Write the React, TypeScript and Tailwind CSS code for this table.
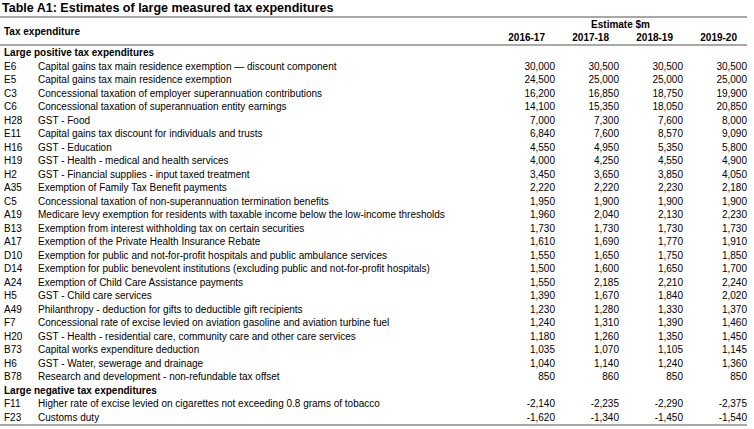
import React from "react";

type Row = [string, string, string, string, string, string];

const positive: Row[] = [
  ["E6", "Capital gains tax main residence exemption \u2014 discount component", "30,000", "30,500", "30,500", "30,500"],
  ["E5", "Capital gains tax main residence exemption", "24,500", "25,000", "25,000", "25,000"],
  ["C3", "Concessional taxation of employer superannuation contributions", "16,200", "16,850", "18,750", "19,900"],
  ["C6", "Concessional taxation of superannuation entity earnings", "14,100", "15,350", "18,050", "20,850"],
  ["H28", "GST - Food", "7,000", "7,300", "7,600", "8,000"],
  ["E11", "Capital gains tax discount for individuals and trusts", "6,840", "7,600", "8,570", "9,090"],
  ["H16", "GST - Education", "4,550", "4,950", "5,350", "5,800"],
  ["H19", "GST - Health - medical and health services", "4,000", "4,250", "4,550", "4,900"],
  ["H2", "GST - Financial supplies - input taxed treatment", "3,450", "3,650", "3,850", "4,050"],
  ["A35", "Exemption of Family Tax Benefit payments", "2,220", "2,220", "2,230", "2,180"],
  ["C5", "Concessional taxation of non-superannuation termination benefits", "1,950", "1,900", "1,900", "1,900"],
  ["A19", "Medicare levy exemption for residents with taxable income below the low-income thresholds", "1,960", "2,040", "2,130", "2,230"],
  ["B13", "Exemption from interest withholding tax on certain securities", "1,730", "1,730", "1,730", "1,730"],
  ["A17", "Exemption of the Private Health Insurance Rebate", "1,610", "1,690", "1,770", "1,910"],
  ["D10", "Exemption for public and not-for-profit hospitals and public ambulance services", "1,550", "1,650", "1,750", "1,850"],
  ["D14", "Exemption for public benevolent institutions (excluding public and not-for-profit hospitals)", "1,500", "1,600", "1,650", "1,700"],
  ["A24", "Exemption of Child Care Assistance payments", "1,550", "2,185", "2,210", "2,240"],
  ["H5", "GST - Child care services", "1,390", "1,670", "1,840", "2,020"],
  ["A49", "Philanthropy - deduction for gifts to deductible gift recipients", "1,230", "1,280", "1,330", "1,370"],
  ["F7", "Concessional rate of excise levied on aviation gasoline and aviation turbine fuel", "1,240", "1,310", "1,390", "1,460"],
  ["H20", "GST - Health - residential care, community care and other care services", "1,180", "1,260", "1,350", "1,450"],
  ["B73", "Capital works expenditure deduction", "1,035", "1,070", "1,105", "1,145"],
  ["H6", "GST - Water, sewerage and drainage", "1,040", "1,140", "1,240", "1,360"],
  ["B78", "Research and development - non-refundable tax offset", "850", "860", "850", "850"],
];

const negative: Row[] = [
  ["F11", "Higher rate of excise levied on cigarettes not exceeding 0.8 grams of tobacco", "-2,140", "-2,235", "-2,290", "-2,375"],
  ["F23", "Customs duty", "-1,620", "-1,340", "-1,450", "-1,540"],
];

const grid = "grid grid-cols-[38px_1fr_64px_64px_64px_64px]";

function DataRow({ r }: { r: Row }) {
  return (
    <div className={`${grid} h-[13.5px] items-center leading-[13.5px]`}>
      <div className="pl-[4px]">{r[0]}</div>
      <div className="whitespace-nowrap">{r[1]}</div>
      <div className="text-right">{r[2]}</div>
      <div className="text-right">{r[3]}</div>
      <div className="text-right">{r[4]}</div>
      <div className="text-right">{r[5]}</div>
    </div>
  );
}

function SectionHead({ label }: { label: string }) {
  return (
    <div className="h-[13.5px] pl-[4px] font-bold leading-[13.5px]">{label}</div>
  );
}

export default function App() {
  return (
    <div
      className="w-[754px] h-[429px] bg-white text-black overflow-hidden"
      style={{ fontFamily: '"Liberation Sans", Arial, sans-serif' }}
    >
      <div className="w-[749px] pr-[2px] text-[10px]">
        <div className="h-[16px] pl-[2px] text-[12.5px] font-bold leading-[16px]">
          Table A1: Estimates of large measured tax expenditures
        </div>
        <div className="h-[2px] bg-[#a8a8a8]" />
        <div className="flex h-[26px] font-bold">
          <div className="flex w-[200px] items-center pl-[4px]">Tax expenditure</div>
          <div className="flex flex-1 flex-col">
            <div className="h-[13px] pr-[97px] text-right leading-[13px]">Estimate $m</div>
            <div className={`${grid} h-[13px] leading-[13px]`}>
              <div className="col-start-3 pr-[10px] text-right">2016-17</div>
              <div className="pr-[10px] text-right">2017-18</div>
              <div className="pr-[10px] text-right">2018-19</div>
              <div className="pr-[10px] text-right">2019-20</div>
            </div>
          </div>
        </div>
        <div className="h-[2px] bg-[#a8a8a8]" />
        <SectionHead label="Large positive tax expenditures" />
        {positive.map((r) => (
          <DataRow key={r[0]} r={r} />
        ))}
        <SectionHead label="Large negative tax expenditures" />
        {negative.map((r) => (
          <DataRow key={r[0]} r={r} />
        ))}
        <div className="h-[2px] bg-[#a8a8a8]" />
      </div>
    </div>
  );
}
